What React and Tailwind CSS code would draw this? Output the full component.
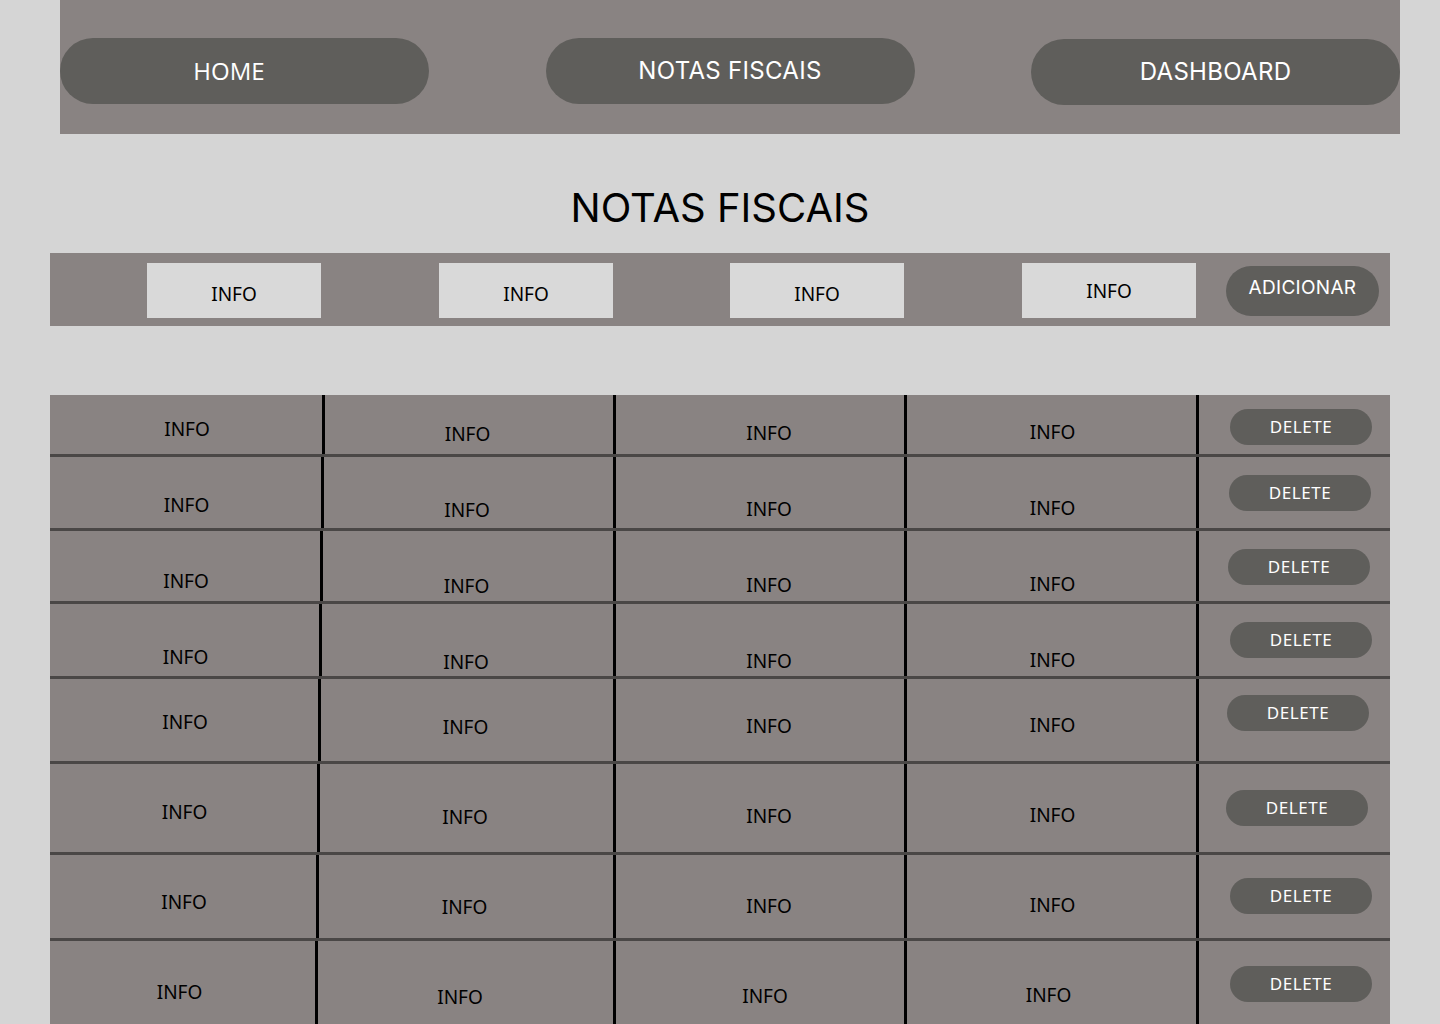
const rows = [
  { h: 'h-[62px]', c1: 'w-[275px]', c2: 'w-[291px]', pt: 'pt-[22px]', bt: 'mt-[14px]', bl: 'ml-[31px]', shift: '' },
  { h: 'h-[74px]', c1: 'w-[274px]', c2: 'w-[292px]', pt: 'pt-[36px]', bt: 'mt-[18px]', bl: 'ml-[30px]', shift: '' },
  { h: 'h-[73px]', c1: 'w-[273px]', c2: 'w-[293px]', pt: 'pt-[38px]', bt: 'mt-[18px]', bl: 'ml-[29px]', shift: '' },
  { h: 'h-[75px]', c1: 'w-[272px]', c2: 'w-[294px]', pt: 'pt-[41px]', bt: 'mt-[18px]', bl: 'ml-[31px]', shift: '' },
  { h: 'h-[85px]', c1: 'w-[271px]', c2: 'w-[295px]', pt: 'pt-[31px]', bt: 'mt-[16px]', bl: 'ml-[28px]', shift: '' },
  { h: 'h-[91px]', c1: 'w-[270px]', c2: 'w-[296px]', pt: 'pt-[36px]', bt: 'mt-[26px]', bl: 'ml-[27px]', shift: '' },
  { h: 'h-[86px]', c1: 'w-[269px]', c2: 'w-[297px]', pt: 'pt-[35px]', bt: 'mt-[23px]', bl: 'ml-[31px]', shift: '' },
  { h: 'h-[89px]', c1: 'w-[268px]', c2: 'w-[298px]', pt: 'pt-[39px]', bt: 'mt-[25px]', bl: 'ml-[31px]', shift: '-translate-x-[4px]' },
];

const sans = "font-['Noto_Sans',sans-serif]";
const inter = "font-['Inter',sans-serif]";

const NavButton = ({ children, extra = '' }) => (
  <button className={`w-[369px] h-[66px] rounded-full bg-[#5f5e5b] text-white flex items-center justify-center ${extra}`}>
    {children}
  </button>
);

const FilterBox = ({ extra = '' }) => (
  <div className={`w-[174px] h-[55px] bg-[#d9d9d9] flex items-center justify-center text-[19px] text-black ${sans} ${extra}`}>
    INFO
  </div>
);

const Cell = ({ w, pt, extra = '', children }) => (
  <div className={`${w} h-full border-r-[3px] border-black flex justify-center ${pt}`}>
    <span className={`block leading-[24px] text-[19px] text-black ${sans} ${extra}`}>{children}</span>
  </div>
);

export default function App() {
  return (
    <div className="min-h-screen bg-[#d5d5d5] overflow-hidden">
      {/* Top nav */}
      <div className="ml-[60px] w-[1340px] h-[134px] bg-[#898382] flex items-start justify-between pt-[38px]">
        <NavButton extra={`pr-[31px] text-[24px] font-['Open_Sans',sans-serif]`}>HOME</NavButton>
        <NavButton extra={`text-[24px] tracking-[0.3px] ${inter}`}>NOTAS FISCAIS</NavButton>
        <NavButton extra={`mt-[1px] text-[24px] tracking-[0.3px] ${inter}`}>DASHBOARD</NavButton>
      </div>

      <h1 className={`mt-[50px] text-center text-[40px] leading-[48px] text-black ${inter}`}>NOTAS FISCAIS</h1>

      {/* Filter bar */}
      <div className="mt-[21px] ml-[50px] w-[1340px] h-[73px] bg-[#898382] flex items-start pt-[10px] pl-[97px]">
        <FilterBox extra="pt-[8px]" />
        <FilterBox extra="ml-[118px] pt-[8px]" />
        <FilterBox extra="ml-[117px] pt-[8px]" />
        <FilterBox extra="ml-[118px] pt-[2px]" />
        <button className={`ml-[30px] mt-[3px] w-[153px] h-[50px] rounded-full bg-[#5f5e5b] text-white text-[19px] tracking-[0.3px] ${inter} flex items-center justify-center pb-[5px]`}>
          ADICIONAR
        </button>
      </div>

      {/* Table */}
      <div className="mt-[69px] ml-[50px] w-[1340px] bg-[#898382]">
        {rows.map((r, i) => (
          <div key={i} className={`flex ${r.h} border-b-[3px] border-[#4a4746]`}>
            <Cell w={`${r.c1} pl-[2px]`} pt={r.pt} extra={r.shift}>INFO</Cell>
            <Cell w={`${r.c2} pr-[3px]`} pt={r.pt} extra={`mt-[5px] ${r.shift}`}>INFO</Cell>
            <Cell w="w-[291px] pl-[18px]" pt={r.pt} extra={`mt-[4px] ${r.shift}`}>INFO</Cell>
            <Cell w="w-[292px] pl-[2px]" pt={r.pt} extra={`mt-[3px] ${r.shift}`}>INFO</Cell>
            <div className="flex-1 h-full">
              <button className={`${r.bt} ${r.bl} w-[142px] h-[36px] rounded-full bg-[#5f5e5b] text-white text-[17px] tracking-[0.6px] ${sans} flex items-center justify-center`}>
                DELETE
              </button>
            </div>
          </div>
        ))}
      </div>
    </div>
  );
}
